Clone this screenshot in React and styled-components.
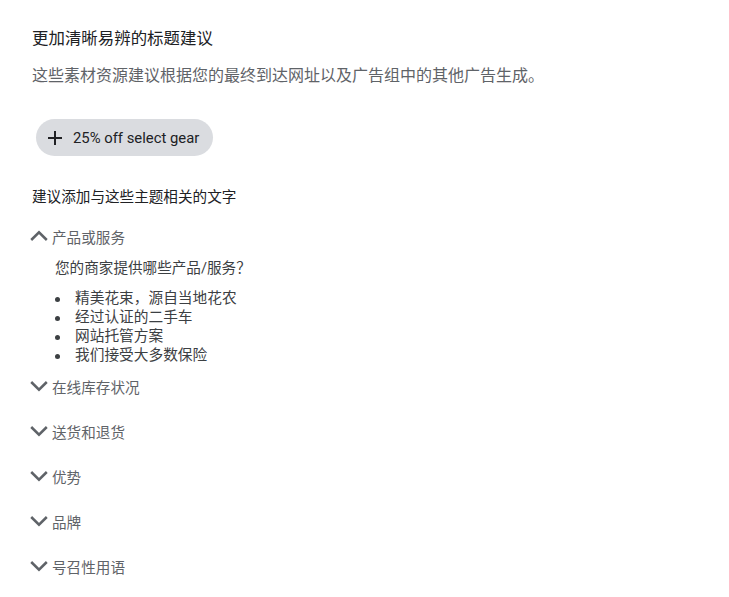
import React from "react";
import styled, { createGlobalStyle } from "styled-components";

const GlobalStyle = createGlobalStyle`
  body {
    margin: 0;
    background: #fff;
    font-family: Roboto, "Noto Sans CJK SC", sans-serif;
  }
`;

const Page = styled.div`
  padding: 28px 32px 20px 32px;
  width: 729px;
  box-sizing: border-box;
`;

const Title = styled.h2`
  margin: 0;
  font-size: 16.45px;
  font-weight: 400;
  line-height: 22px;
  color: #202124;
`;

const Description = styled.p`
  margin: 15px 0 0 0;
  font-size: 16px;
  line-height: 22px;
  color: #5f6368;
`;

const Chip = styled.button`
  display: inline-flex;
  align-items: center;
  gap: 11px;
  margin: 32px 0 0 4px;
  height: 37px;
  padding: 0 14px 0 12px;
  border: none;
  border-radius: 19px;
  background: #dadce0;
  color: #202124;
  font-family: Roboto, sans-serif;
  font-size: 14.85px;
  cursor: pointer;
`;

const Hint = styled.div`
  margin-top: 31px;
  font-size: 14.6px;
  line-height: 20px;
  color: #202124;
`;

const Section = styled.div`
  margin-top: ${(p) => p.$gap}px;
`;

const Header = styled.div`
  display: flex;
  align-items: center;
  gap: 4px;
  height: 22px;
  margin-left: -2px;
  font-size: 14.6px;
  color: #5f6368;
`;

const Body = styled.div`
  padding: 11px 0 0 23px;
  color: #3c4043;
`;

const Question = styled.div`
  line-height: 20px;
  font-size: 14.6px;
`;

const List = styled.ul`
  margin: 11px 0 0 0;
  padding: 0;
  list-style: none;
`;

const Item = styled.li`
  position: relative;
  padding-left: 20px;
  line-height: 19px;
  font-size: 14.7px;
  &::before {
    content: "";
    position: absolute;
    left: 0;
    top: 8px;
    width: 5px;
    height: 5px;
    border-radius: 50%;
    background: #3c4043;
  }
`;

const Chevron = ({ up }) => (
  <svg width="18" height="12" viewBox="0 0 18 12">
    <polyline
      points={up ? "1.2,10 9,2.3 16.8,10" : "1.2,2 9,9.7 16.8,2"}
      fill="none"
      stroke="#5f6368"
      strokeWidth="2.5"
    />
  </svg>
);

const Plus = () => (
  <svg width="14" height="14" viewBox="0 0 14 14">
    <path d="M7 0v14M0 7h14" stroke="#202124" strokeWidth="2" />
  </svg>
);

const closed = ["在线库存状况", "送货和退货", "优势", "品牌", "号召性用语"];
const items = ["精美花束，源自当地花农", "经过认证的二手车", "网站托管方案", "我们接受大多数保险"];

export default function App() {
  return (
    <Page>
      <GlobalStyle />
      <Title>更加清晰易辨的标题建议</Title>
      <Description>这些素材资源建议根据您的最终到达网址以及广告组中的其他广告生成。</Description>
      <Chip>
        <Plus />
        25% off select gear
      </Chip>
      <Hint>建议添加与这些主题相关的文字</Hint>
      <Section $gap={18}>
        <Header>
          <Chevron up />
          产品或服务
        </Header>
        <Body>
          <Question>您的商家提供哪些产品/服务？</Question>
          <List>
            {items.map((t) => (
              <Item key={t}>{t}</Item>
            ))}
          </List>
        </Body>
      </Section>
      {closed.map((t, i) => (
        <Section key={t} $gap={i === 0 ? 10 : 23}>
          <Header>
            <Chevron />
            {t}
          </Header>
        </Section>
      ))}
    </Page>
  );
}
